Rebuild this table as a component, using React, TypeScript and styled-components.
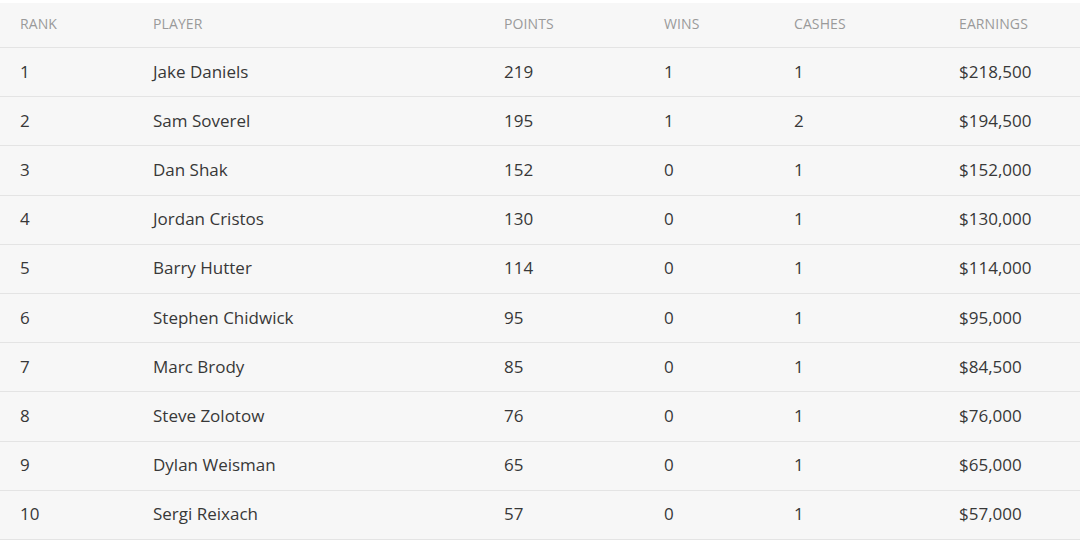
import React from 'react';
import styled, {createGlobalStyle} from 'styled-components';

interface IPlayer {
  rank: number;
  name: string;
  points: number;
  wins: number;
  cashes: number;
  earnings: string;
}

const players: IPlayer[] = [
  {rank: 1, name: 'Jake Daniels', points: 219, wins: 1, cashes: 1, earnings: '$218,500'},
  {rank: 2, name: 'Sam Soverel', points: 195, wins: 1, cashes: 2, earnings: '$194,500'},
  {rank: 3, name: 'Dan Shak', points: 152, wins: 0, cashes: 1, earnings: '$152,000'},
  {rank: 4, name: 'Jordan Cristos', points: 130, wins: 0, cashes: 1, earnings: '$130,000'},
  {rank: 5, name: 'Barry Hutter', points: 114, wins: 0, cashes: 1, earnings: '$114,000'},
  {rank: 6, name: 'Stephen Chidwick', points: 95, wins: 0, cashes: 1, earnings: '$95,000'},
  {rank: 7, name: 'Marc Brody', points: 85, wins: 0, cashes: 1, earnings: '$84,500'},
  {rank: 8, name: 'Steve Zolotow', points: 76, wins: 0, cashes: 1, earnings: '$76,000'},
  {rank: 9, name: 'Dylan Weisman', points: 65, wins: 0, cashes: 1, earnings: '$65,000'},
  {rank: 10, name: 'Sergi Reixach', points: 57, wins: 0, cashes: 1, earnings: '$57,000'},
];

const columns = ['Rank', 'Player', 'Points', 'Wins', 'Cashes', 'Earnings'];

const App: React.FC = () => (
  <>
    <GlobalStyle/>
    <Table>
      <HeaderRow>
        {columns.map(c => <HeadCell key={c}>{c}</HeadCell>)}
      </HeaderRow>
      {players.map(p => (
        <Row key={p.rank}>
          <Cell>{p.rank}</Cell>
          <Cell>{p.name}</Cell>
          <Cell>{p.points}</Cell>
          <Cell>{p.wins}</Cell>
          <Cell>{p.cashes}</Cell>
          <Cell>{p.earnings}</Cell>
        </Row>
      ))}
    </Table>
  </>
);
export default App;

const GlobalStyle = createGlobalStyle`
  body {
    margin: 0;
    background: #ffffff;
    font-family: "Open Sans", "Liberation Sans", sans-serif;
  }
`;

const Table = styled.div`
  margin-top: 3px;
  background: #f7f7f7;
`;

const gridCols = `
  display: grid;
  grid-template-columns: 133px 351px 160px 130px 165px 1fr;
  padding-left: 20px;
  align-items: center;
  border-bottom: 1px solid #e4e4e4;
  box-sizing: border-box;
`;

const HeaderRow = styled.div`
  ${gridCols};
  height: 45px;
  padding-bottom: 4px;
`;

const Row = styled.div`
  ${gridCols};
  height: 49.2px;
  padding-bottom: 2px;
`;

const HeadCell = styled.div`
  font-size: 14px;
  color: #9a9a9a;
  text-transform: uppercase;
  letter-spacing: 0.1px;
`;

const Cell = styled.div`
  font-size: 17px;
  color: #383838;
`;
